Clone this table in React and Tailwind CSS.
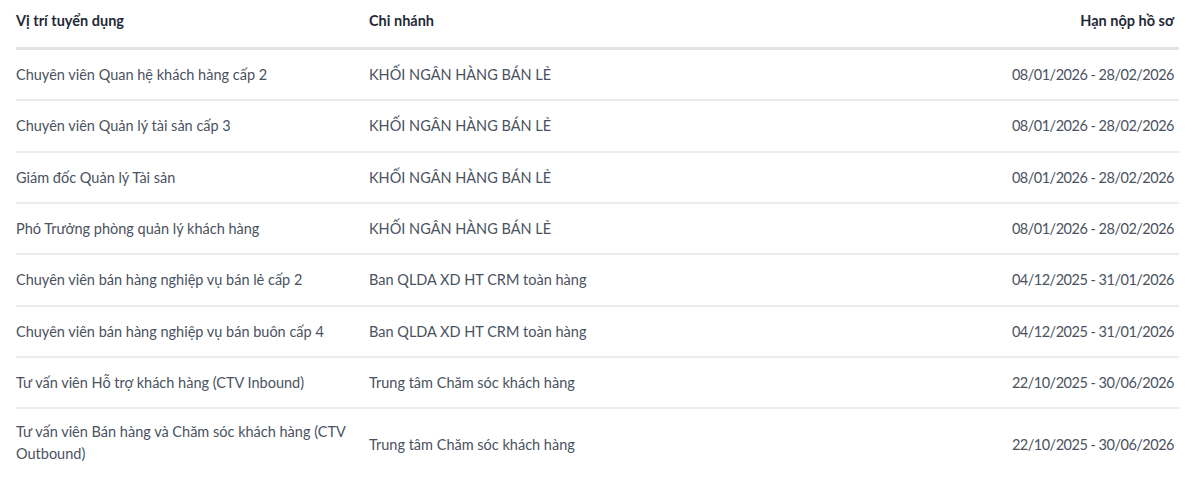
const jobs = [
  { title: 'Chuyên viên Quan hệ khách hàng cấp 2', branch: 'KHỐI NGÂN HÀNG BÁN LẺ', date: '08/01/2026 - 28/02/2026' },
  { title: 'Chuyên viên Quản lý tài sản cấp 3', branch: 'KHỐI NGÂN HÀNG BÁN LẺ', date: '08/01/2026 - 28/02/2026' },
  { title: 'Giám đốc Quản lý Tài sản', branch: 'KHỐI NGÂN HÀNG BÁN LẺ', date: '08/01/2026 - 28/02/2026' },
  { title: 'Phó Trưởng phòng quản lý khách hàng', branch: 'KHỐI NGÂN HÀNG BÁN LẺ', date: '08/01/2026 - 28/02/2026' },
  { title: 'Chuyên viên bán hàng nghiệp vụ bán lẻ cấp 2', branch: 'Ban QLDA XD HT CRM toàn hàng', date: '04/12/2025 - 31/01/2026' },
  { title: 'Chuyên viên bán hàng nghiệp vụ bán buôn cấp 4', branch: 'Ban QLDA XD HT CRM toàn hàng', date: '04/12/2025 - 31/01/2026' },
  { title: 'Tư vấn viên Hỗ trợ khách hàng (CTV Inbound)', branch: 'Trung tâm Chăm sóc khách hàng', date: '22/10/2025 - 30/06/2026' },
  { title: 'Tư vấn viên Bán hàng và Chăm sóc khách hàng (CTV Outbound)', branch: 'Trung tâm Chăm sóc khách hàng', date: '22/10/2025 - 30/06/2026' },
]

export default function App() {
  return (
    <div className="bg-white pl-4 pr-[21px] font-['Lato','Noto_Sans',sans-serif] text-[14.5px] text-[#4a5260]">
      <table className="w-full border-collapse">
        <thead>
          <tr className="border-b-[3px] border-[#e3e3e3]">
            <th className="w-[353px] pt-[10px] pb-[16px] text-left font-bold leading-[21px] text-[#1f2a37]">Vị trí tuyển dụng</th>
            <th className="pt-[10px] pb-[16px] text-left font-bold leading-[21px] text-[#1f2a37]">Chi nhánh</th>
            <th className="pt-[10px] pb-[16px] pr-[5px] text-right font-bold leading-[21px] text-[#1f2a37]">Hạn nộp hồ sơ</th>
          </tr>
        </thead>
        <tbody>
          {jobs.map((job, i) => {
            const last = i === jobs.length - 1
            return (
              <tr key={i} className={last ? '' : 'border-b-2 border-[#ececec]'}>
                <td className={`pr-4 ${last ? 'pt-[12px] pb-[14px] leading-[22px]' : 'py-[14px] leading-[21.33px]'}`}>{job.title}</td>
                <td className="py-[14px] leading-[21.33px]">{job.branch}</td>
                <td className="py-[14px] pr-[5px] text-right leading-[21.33px] tracking-[-0.5px]">{job.date}</td>
              </tr>
            )
          })}
        </tbody>
      </table>
    </div>
  )
}
